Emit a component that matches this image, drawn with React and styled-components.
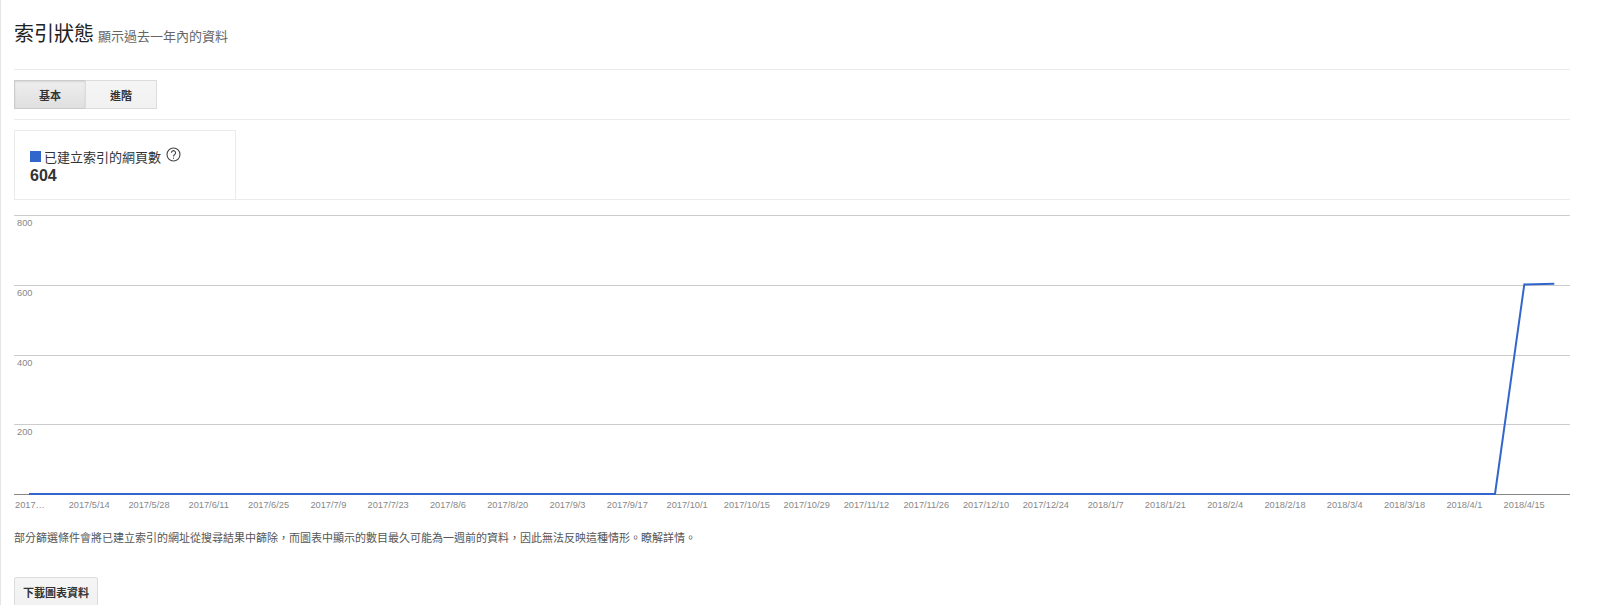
import React from "react";
import styled, { createGlobalStyle } from "styled-components";

const cjk = '"Liberation Sans", "Noto Sans CJK TC", sans-serif';

const Global = createGlobalStyle`
  html, body { margin: 0; padding: 0; background: #fff; overflow: hidden; height: 605px; }
  body { font-family: ${cjk}; color: #333; }
`;

const Page = styled.main`
  width: 1615px;
  height: 605px;
  box-sizing: border-box;
  border-left: 1px solid #e5e5e5;
  padding: 0 45px 0 13px;
  overflow: hidden;
`;

const Header = styled.header`
  height: 70px;
  box-sizing: border-box;
  border-bottom: 1px solid #ebebeb;
  display: flex;
  align-items: baseline;
  gap: 4px;
  padding-top: 21px;
`;

const Title = styled.h1`
  margin: 0;
  font-size: 20px;
  line-height: 26px;
  font-weight: 400;
  color: #222;
`;

const Subtitle = styled.span`
  font-size: 13px;
  color: #666;
`;

const Toolbar = styled.nav`
  height: 50px;
  box-sizing: border-box;
  border-bottom: 1px solid #ebebeb;
  padding-top: 10px;
  display: flex;
`;

const Tab = styled.button`
  width: ${(p) => (p.$active ? "72px" : "72px")};
  height: 29px;
  box-sizing: border-box;
  margin-left: ${(p) => (p.$active ? "0" : "-1px")};
  padding: 0;
  font: bold 11px ${cjk};
  color: #333;
  border: 1px solid ${(p) => (p.$active ? "#ccc" : "#dcdcdc")};
  background: ${(p) => (p.$active ? "linear-gradient(#eee, #e0e0e0)" : "linear-gradient(#f5f5f5, #f1f1f1)")};
  box-shadow: ${(p) => (p.$active ? "inset 0 1px 2px rgba(0,0,0,.1)" : "none")};
`;

const StatRow = styled.section`
  margin-top: 10px;
  height: 70px;
  box-sizing: border-box;
  border-bottom: 1px solid #ebebeb;
  display: flex;
`;

const StatCard = styled.div`
  width: 222px;
  box-sizing: border-box;
  border: 1px solid #ebebeb;
  border-bottom: none;
  padding: 17px 15px 0;
`;

const StatLabel = styled.div`
  display: flex;
  align-items: center;
  height: 17px;
  font-size: 13px;
  color: #333;
`;

const Swatch = styled.span`
  width: 11px;
  height: 11px;
  margin-right: 3px;
  background: #3366cc;
`;

const HelpIcon = styled.svg`
  width: 15px;
  height: 15px;
  margin: -5px 0 0 5px;
  fill: none;
  stroke: #444;
  stroke-width: 1.1;
`;

const StatValue = styled.div`
  margin-top: 2px;
  font-size: 16px;
  line-height: 18px;
  font-weight: 700;
  color: #333;
`;

const ChartWrap = styled.figure`
  margin: 0;
  height: 314px;
`;

const ChartSvg = styled.svg`
  display: block;
  width: 1557px;
  height: 314px;
  overflow: visible;
`;

const AxisText = styled.text`
  font-family: "Liberation Sans", sans-serif;
  font-size: 9.24px;
  fill: #888;
`;

const Note = styled.p`
  margin: 16px 0 0;
  font-size: 11px;
  line-height: 16px;
  color: #555;
`;

const Download = styled.button`
  display: block;
  margin-top: 31px;
  width: 84px;
  height: 30px;
  box-sizing: border-box;
  padding: 0;
  font: bold 11px ${cjk};
  color: #333;
  border: 1px solid #dcdcdc;
  border-radius: 2px;
  background: linear-gradient(#f5f5f5, #f1f1f1);
`;

// Chart coordinates: the svg origin is at page (14, 200).
const OX = 14;
const OY = 200;
const gridYs = [215, 285, 355, 424];
const yLabels = [["800", 226], ["600", 296], ["400", 366], ["200", 435]];
const dates = [
  "2017/5/14", "2017/5/28", "2017/6/11", "2017/6/25", "2017/7/9", "2017/7/23", "2017/8/6",
  "2017/8/20", "2017/9/3", "2017/9/17", "2017/10/1", "2017/10/15", "2017/10/29", "2017/11/12",
  "2017/11/26", "2017/12/10", "2017/12/24", "2018/1/7", "2018/1/21", "2018/2/4", "2018/2/18",
  "2018/3/4", "2018/3/18", "2018/4/1", "2018/4/15",
];

function Chart() {
  const pts = [[29, 494], [1495, 494], [1524.3, 284.4], [1554.3, 283.7]]
    .map(([x, y]) => `${x - OX},${y - OY}`)
    .join(" ");
  return (
    <ChartSvg viewBox="0 0 1557 314">
      {gridYs.map((y) => (
        <line key={y} x1="0" x2="1556" y1={y - OY + 0.5} y2={y - OY + 0.5} stroke="#ccc" />
      ))}
      <line x1="0" x2="1556" y1={494 - OY + 0.5} y2={494 - OY + 0.5} stroke="#888" />
      {yLabels.map(([t, y]) => (
        <AxisText key={t} x={17 - OX} y={y - OY}>{t}</AxisText>
      ))}
      <polyline points={pts} fill="none" stroke="#3366cc" strokeWidth="2" />
      <AxisText x={15 - OX} y={508 - OY}>2017…</AxisText>
      {dates.map((d, i) => (
        <AxisText key={d} x={89.2 - OX + i * 59.79} y={508 - OY} textAnchor="middle">{d}</AxisText>
      ))}
    </ChartSvg>
  );
}

export default function App() {
  return (
    <>
      <Global />
      <Page>
        <Header>
          <Title>索引狀態</Title>
          <Subtitle>顯示過去一年內的資料</Subtitle>
        </Header>
        <Toolbar>
          <Tab $active>基本</Tab>
          <Tab>進階</Tab>
        </Toolbar>
        <StatRow>
          <StatCard>
            <StatLabel>
              <Swatch />
              已建立索引的網頁數
              <HelpIcon viewBox="0 0 15 15">
                <circle cx="7.5" cy="7.5" r="6.5" />
                <path d="M5.4 5.8a2.1 2.1 0 1 1 3.3 1.7c-.8.5-1.2.9-1.2 1.9" />
                <path d="M7.5 10.6v1.1" />
              </HelpIcon>
            </StatLabel>
            <StatValue>604</StatValue>
          </StatCard>
        </StatRow>
        <ChartWrap>
          <Chart />
        </ChartWrap>
        <Note>部分篩選條件會將已建立索引的網址從搜尋結果中篩除，而圖表中顯示的數目最久可能為一週前的資料，因此無法反映這種情形。瞭解詳情。</Note>
        <Download>下載圖表資料</Download>
      </Page>
    </>
  );
}
